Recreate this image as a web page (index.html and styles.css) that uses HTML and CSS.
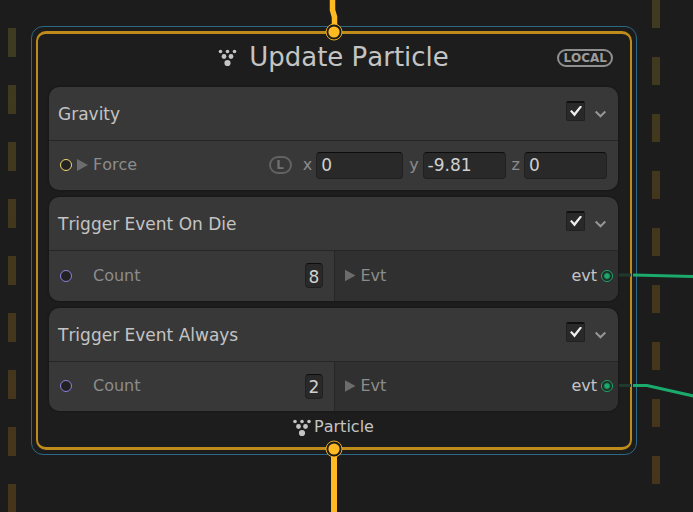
FILE: index.html
```html
<!DOCTYPE html>
<html lang="en">
<head>
<meta charset="utf-8">
<meta name="viewport" content="width=device-width, initial-scale=1">
<title>Update Particle</title>
<link rel="stylesheet" href="styles.css">
</head>
<body>
<svg class="defs" aria-hidden="true">
  <symbol id="particle" viewBox="0 0 18 18">
    <g fill="currentColor"><circle cx="2" cy="2.5" r="1.8"/><circle cx="9" cy="2.5" r="1.8"/><circle cx="16" cy="2.5" r="1.8"/><circle cx="5.5" cy="7.5" r="2.4"/><circle cx="12.5" cy="7.5" r="2.4"/><circle cx="9" cy="14" r="3.1"/></g>
  </symbol>
  <symbol id="chevron" viewBox="0 0 12 8">
    <path d="M.7 1.500 5.500 6.300l4.800-4.800" fill="none" stroke="currentColor" stroke-width="2"/>
  </symbol>
  <symbol id="flow" viewBox="0 0 18 18">
    <circle cx="9" cy="9" r="8" fill="#1c1c1c" stroke="#ffb921" stroke-width=".9"/><circle cx="9" cy="9" r="5.600" fill="#ffb921"/>
  </symbol>
</svg>
<main class="canvas">
  <div class="rail rail-left"></div>
  <section class="node">
    <svg class="wire wire-in" viewBox="0 0 12 30" aria-hidden="true"><path d="M4.500-1V10L6.500 17V30" fill="none" stroke="#ffb921" stroke-width="5.500"/></svg>
    <div class="frame">
      <header class="title">
        <svg class="title-icon" aria-hidden="true"><use href="#particle"/></svg>
        <h1>Update Particle</h1>
        <span class="local">LOCAL</span>
      </header>

      <div class="blocks">
        <article class="block">
          <header class="block-head">
            <h2>Gravity</h2>
            <input class="check" type="checkbox" aria-label="Enable Gravity" checked>
            <button class="fold" type="button" aria-label="Collapse Gravity"><svg aria-hidden="true"><use href="#chevron"/></svg></button>
          </header>
          <div class="block-body">
            <div class="slot">
              <span class="port port-vector"></span><span class="arrow"></span><span class="name">Force</span>
              <span class="space">L</span>
              <div class="vector">
                <label for="fx">x</label><input id="fx" type="text" value="0">
                <label for="fy">y</label><input id="fy" type="text" value="-9.81">
                <label for="fz">z</label><input id="fz" type="text" value="0">
              </div>
            </div>
          </div>
        </article>

        <article class="block">
          <header class="block-head">
            <h2>Trigger Event On Die</h2>
            <input class="check" type="checkbox" aria-label="Enable Trigger Event On Die" checked>
            <button class="fold" type="button" aria-label="Collapse Trigger Event On Die"><svg aria-hidden="true"><use href="#chevron"/></svg></button>
          </header>
          <div class="block-body">
            <div class="slot">
              <span class="port port-count"></span><label class="name indent" for="c1">Count</label>
              <input class="count" id="c1" type="text" value="8">
            </div>
            <div class="slot output">
              <span class="arrow"></span><span class="name">Evt</span>
              <span class="event">evt</span><span class="port port-event"></span>
              <svg class="wire wire-out" viewBox="0 0 80 30" aria-hidden="true"><path d="M1 11h12" stroke="#1f3a2d" stroke-width="3"/><path d="M15 11 80 12.500" stroke="#1aaa6b" stroke-width="3"/></svg>
            </div>
          </div>
        </article>

        <article class="block">
          <header class="block-head">
            <h2>Trigger Event Always</h2>
            <input class="check" type="checkbox" aria-label="Enable Trigger Event Always" checked>
            <button class="fold" type="button" aria-label="Collapse Trigger Event Always"><svg aria-hidden="true"><use href="#chevron"/></svg></button>
          </header>
          <div class="block-body">
            <div class="slot">
              <span class="port port-count"></span><label class="name indent" for="c2">Count</label>
              <input class="count" id="c2" type="text" value="2">
            </div>
            <div class="slot output">
              <span class="arrow"></span><span class="name">Evt</span>
              <span class="event">evt</span><span class="port port-event"></span>
              <svg class="wire wire-out" viewBox="0 0 80 30" aria-hidden="true"><path d="M1 10.500h12" stroke="#1f3a2d" stroke-width="3"/><path d="M15 10.500H29L80 22" fill="none" stroke="#1aaa6b" stroke-width="3"/></svg>
            </div>
          </div>
        </article>
      </div>

      <footer class="flow-out">
        <svg class="flow-icon" aria-hidden="true"><use href="#particle"/></svg>
        <span>Particle</span>
      </footer>
    </div>
    <div class="wire wire-bottom"></div>
    <svg class="port-flow port-top" aria-hidden="true"><use href="#flow"/></svg>
    <svg class="port-flow port-bottom" aria-hidden="true"><use href="#flow"/></svg>
  </section>
  <div class="rail rail-right"></div>
</main>
</body>
</html>
```
FILE: styles.css
```css
* { box-sizing: border-box; }

body {
  margin: 0;
  background: #1c1c1c;
  color: #c4c4c4;
  font-family: "DejaVu Sans", Verdana, sans-serif;
  font-size: 16px;
  font-kerning: none;
  line-height: 20px;
}

h1, h2 { margin: 0; font-weight: 400; }

.defs { position: absolute; width: 0; height: 0; }

.canvas {
  display: grid;
  grid-template-columns: 8px 1fr 8px;
  column-gap: 15px;
  min-height: 100vh;
  padding: 0 33px 0 8px;
  overflow: hidden;
}

.rail {
  background:
    repeating-linear-gradient(#1c1c1c00 0 29px, #1c1c1c 29px 57px),
    linear-gradient(#3e3b20, #42371c 40%, #46351b);
}
.rail-left { margin-top: 28px; }
.rail-right {
  margin-bottom: 27px;
  background:
    repeating-linear-gradient(#1c1c1c00 0 28px, #1c1c1c 28px 57px),
    linear-gradient(#3e3b20, #42371c 40%, #46351b);
}

.node {
  position: relative;
  align-self: start;
  margin-top: 26px;
  padding: 4px;
  border: 1px solid #2b6a87;
  border-radius: 12px;
}

.frame {
  padding: 0 12px 0 11px;
  border: solid #bd8c1b;
  border-width: 3px 2px;
  border-radius: 10px;
  background: #1d1d1d;
}

.title {
  display: grid;
  grid-template-columns: 1fr auto 1fr;
  align-items: center;
  height: 53px;
  padding: 0 5px 5px 24px;
}
.title h1 { padding: 0 0 2px 12px; font-size: 26px; line-height: 32px; }
.title-icon { justify-self: end; width: 19px; height: 18px; }
.local {
  justify-self: end;
  padding: 0 4px;
  border: 2px solid #8f8f8f;
  border-radius: 9px;
  color: #9c9c9c;
  font-size: 12px;
  font-weight: 700;
  line-height: 14px;
}

.blocks { display: grid; gap: 7px; }

.block {
  border-radius: 10px;
  background: #383838;
  box-shadow: 0 0 2px #101010;
}

.block-head {
  display: flex;
  align-items: center;
  height: 53px;
  padding: 0 10px 0 9px;
}
.block-head h2 { flex: 1; font-size: 17px; line-height: 20px; }

.check {
  appearance: none;
  width: 19px;
  height: 20px;
  margin: 0 9px 6px 0;
  border: 1px solid #202020;
  border-top: 2px solid #101010;
  border-radius: 2px;
  background: #292929;
}
.check:checked::before {
  content: "";
  display: block;
  width: 12px;
  height: 11px;
  margin: 3px 0 0 3px;
  background: #eeeeee;
  clip-path: polygon(0 53%, 14% 40%, 36% 66%, 86% 0, 100% 12%, 38% 100%);
}

.fold {
  display: flex;
  width: 14px;
  padding: 0 1px;
  border: 0;
  background: none;
  color: #969696;
}
.fold svg { width: 12px; height: 8px; }

.block-body {
  display: flex;
  border-top: 1px solid #262626;
}

.slot {
  position: relative;
  display: flex;
  flex: 1 1 50%;
  align-items: center;
  height: 50px;
  padding: 0 11px 1px;
  color: #8c8c8c;
}
.output {
  padding: 0 5px 1px 10px;
  border-left: 1px solid #262626;
  border-radius: 0 0 10px 0;
  background: #303030;
}
.block:first-child .slot,
.block:last-child .slot { height: 49px; }

.port {
  flex: none;
  width: 12px;
  height: 12px;
  border: 1px solid;
  border-radius: 50%;
  background: #212121;
}
.port-vector { color: #f5d66b; }
.port-count { color: #9180e0; }
.port-event {
  color: #1aaa6b;
  background: radial-gradient(#1aaa6b 2px, #212121 4px);
}

.arrow {
  flex: none;
  width: 11px;
  height: 12px;
  margin-right: 5px;
  background: #6c6c6c;
  clip-path: polygon(0 0, 100% 50%, 0 100%);
}
.port + .arrow { margin-left: 5px; }
.indent { margin-left: 21px; }
.event { margin: 0 4px 0 auto; color: #c4c4c4; }

.space {
  width: 23px;
  margin: 0 11px 0 auto;
  border: 2px solid #626262;
  border-radius: 9px;
  color: #707070;
  font-size: 12px;
  font-weight: 700;
  line-height: 14px;
  text-align: center;
}

.vector {
  display: grid;
  grid-template-columns: auto 87px auto 83px auto 83px;
  align-items: center;
  column-gap: 4px;
}
.vector label:not(:first-child) { margin-left: 2px; }

.slot input {
  height: 27px;
  padding: 0 4px;
  border: 1px solid #202020;
  border-top-color: #0c0c0c;
  border-radius: 4px;
  background: #292929;
  color: #d0d0d0;
  font: inherit;
  font-size: 17px;
}
.slot .vector input { width: 100%; }
.slot .count {
  width: 18px;
  height: 25px;
  margin-left: auto;
  padding: 2px 0 0 3px;
}

.flow-out {
  display: flex;
  align-items: center;
  justify-content: center;
  gap: 3px;
  height: 36px;
  padding-bottom: 5px;
}
.flow-icon { width: 18px; height: 18px; margin-top: 3px; }

.wire { position: absolute; }
.wire-in { top: -27px; left: 50%; width: 12px; height: 30px; margin-left: -6px; }
.wire-bottom {
  top: 100%;
  left: 50%;
  width: 6px;
  height: 100vh;
  margin-left: -3px;
  background: #ffb921;
}
.wire-out { top: 13px; left: 100%; width: 80px; height: 30px; }
.port-flow { position: absolute; left: 50%; width: 18px; height: 18px; margin-left: -9px; }
.port-top { top: -4px; }
.port-bottom { bottom: -4px; }
```
